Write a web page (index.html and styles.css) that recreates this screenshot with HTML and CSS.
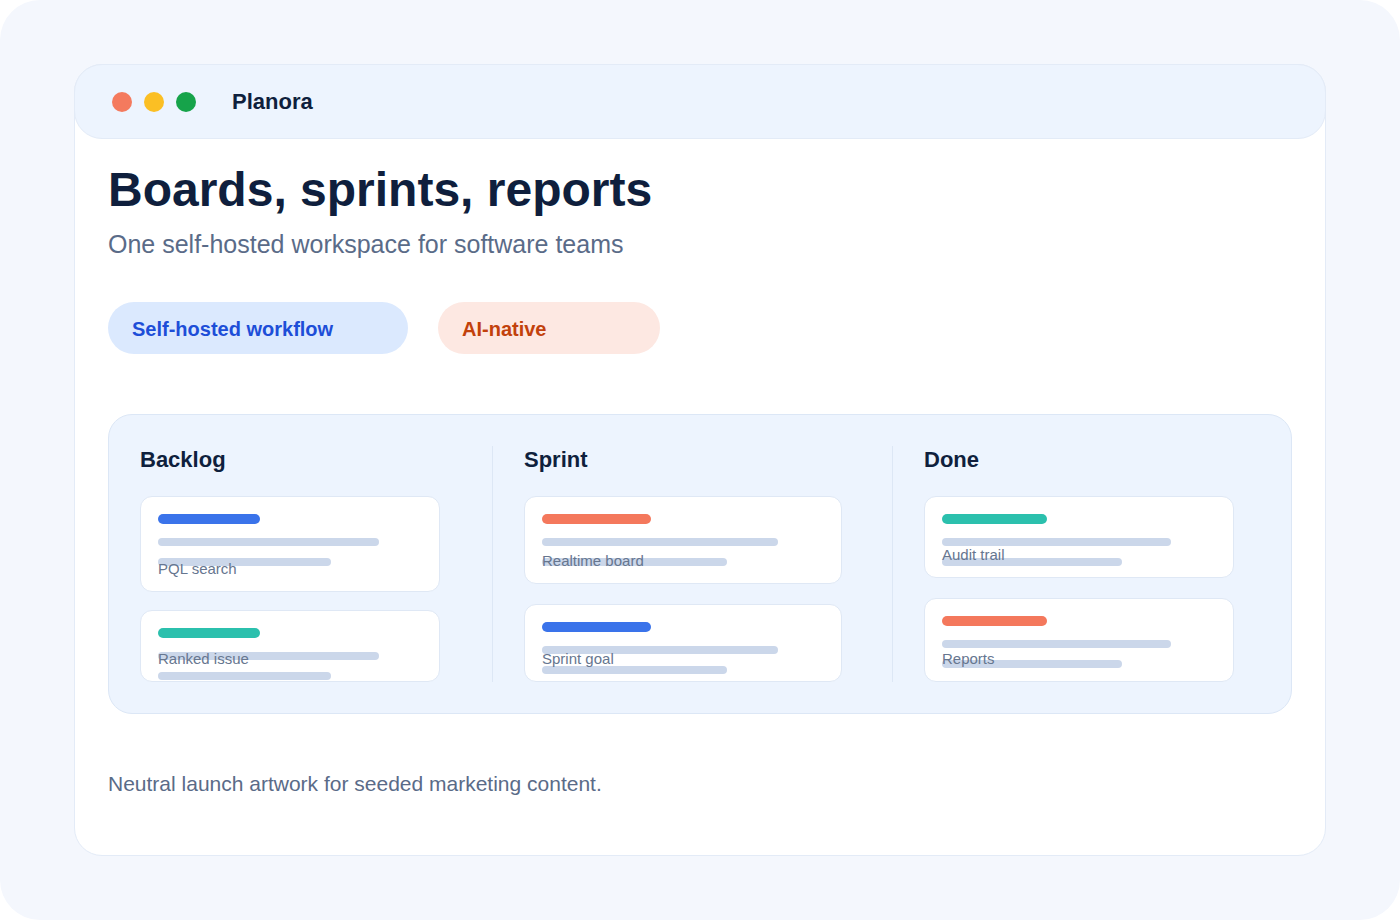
FILE: index.html
```html
<!DOCTYPE html>
<html lang="en">
<head>
  <meta charset="utf-8">
  <meta name="viewport" content="width=device-width, initial-scale=1.0">
  <link rel="stylesheet" href="styles.css">
  <title>Planora</title>
</head>
<body>
  <div class="canvas">
    <div class="window">
      <!-- window chrome -->
      <div class="titlebar">
        <span class="dot dot-red"></span>
        <span class="dot dot-yellow"></span>
        <span class="dot dot-green"></span>
        <span class="app-name">Planora</span>
      </div>

      <div class="content">
        <h1>Boards, sprints, reports</h1>
        <p class="lead">One self-hosted workspace for software teams</p>

        <div class="pills">
          <span class="pill pill-blue">Self-hosted workflow</span>
          <span class="pill pill-red">AI-native</span>
        </div>

        <div class="board">
          <div class="column col-backlog">
            <h2>Backlog</h2>
            <div class="card card-b1">
              <div class="bar bar-blue"></div>
              <div class="line line-long"></div>
              <div class="line line-short"></div>
              <span class="card-label">PQL search</span>
            </div>
            <div class="card card-b2">
              <div class="bar bar-teal"></div>
              <div class="line line-long"></div>
              <div class="line line-short"></div>
              <span class="card-label">Ranked issue</span>
            </div>
          </div>

          <div class="column col-sprint">
            <h2>Sprint</h2>
            <div class="card card-s1">
              <div class="bar bar-coral"></div>
              <div class="line line-long"></div>
              <div class="line line-short"></div>
              <span class="card-label">Realtime board</span>
            </div>
            <div class="card card-s2">
              <div class="bar bar-blue"></div>
              <div class="line line-long"></div>
              <div class="line line-short"></div>
              <span class="card-label">Sprint goal</span>
            </div>
          </div>

          <div class="column col-done">
            <h2>Done</h2>
            <div class="card card-d1">
              <div class="bar bar-teal"></div>
              <div class="line line-long"></div>
              <div class="line line-short"></div>
              <span class="card-label">Audit trail</span>
            </div>
            <div class="card card-d2">
              <div class="bar bar-coral"></div>
              <div class="line line-long"></div>
              <div class="line line-short"></div>
              <span class="card-label">Reports</span>
            </div>
          </div>
        </div>

        <p class="note">Neutral launch artwork for seeded marketing content.</p>
      </div>
    </div>
  </div>
</body>
</html>
```

FILE: styles.css
```css
body {
  margin: 0;
  padding: 0;
  background: #ffffff;
  font-family: "Liberation Sans", Arial, sans-serif;
}

.canvas {
  width: 1400px;
  height: 920px;
  box-sizing: border-box;
  padding: 64px 74px;
  background: #f4f7fd;
  border-radius: 40px;
}

.window {
  height: 792px;
  box-sizing: border-box;
  background: #ffffff;
  border: 1px solid #e3ebf7;
  border-radius: 28px;
}

/* title bar */
.titlebar {
  height: 75px;
  box-sizing: border-box;
  margin: -1px -1px 0;
  padding-left: 37px;
  display: flex;
  align-items: center;
  gap: 12px;
  background: #edf4fe;
  border: 1px solid #e3ebf7;
  border-radius: 28px;
}

.dot {
  width: 20px;
  height: 20px;
  border-radius: 50%;
}

.dot-red { background: #f47a5e; }
.dot-yellow { background: #fbbf24; }
.dot-green { background: #16a34a; }

.app-name {
  margin-left: 24px;
  font-size: 22px;
  font-weight: bold;
  color: #0f1f3d;
}

.content {
  padding: 23px 33px 0;
}

h1 {
  margin: 0;
  font-size: 48px;
  line-height: 56px;
  font-weight: bold;
  color: #0f1f3d;
}

.lead {
  margin: 11px 0 0;
  font-size: 25px;
  line-height: 30px;
  color: #5a6b88;
}

.pills {
  display: flex;
  gap: 30px;
  margin-top: 43px;
}

.pill {
  height: 52px;
  box-sizing: border-box;
  padding: 2px 0 0 24px;
  display: flex;
  align-items: center;
  border-radius: 26px;
  font-size: 20px;
  font-weight: bold;
}

.pill-blue {
  width: 300px;
  background: #dbe9fe;
  color: #1d4ed8;
}

.pill-red {
  width: 222px;
  background: #fde8e2;
  color: #c2410c;
}

/* kanban preview */
.board {
  margin-top: 60px;
  padding: 31px;
  display: flex;
  background: #edf4fe;
  border: 1px solid #dce7f6;
  border-radius: 24px;
}

.column {
  display: flex;
  flex-direction: column;
}

.col-backlog {
  width: 300px;
  margin-right: 52px;
}

.col-sprint {
  width: 318px;
  margin-right: 50px;
  padding-left: 31px;
  border-left: 1px solid #dde7f5;
}

.col-done {
  width: 310px;
  padding-left: 31px;
  border-left: 1px solid #dde7f5;
}

.column h2 {
  margin: 0 0 22px;
  font-size: 22px;
  line-height: 28px;
  font-weight: bold;
  color: #0f1f3d;
}

.card {
  position: relative;
  box-sizing: border-box;
  padding: 17px;
  background: #ffffff;
  border: 1px solid #dfe8f5;
  border-radius: 12px;
}

.card + .card { margin-top: 20px; }
.col-backlog .card + .card { margin-top: 18px; }

.card-b1 { height: 96px; }
.card-b2 { height: 72px; }
.card-s1 { height: 88px; }
.card-s2 { height: 78px; }
.card-d1 { height: 82px; }
.card-d2 { height: 84px; }

.bar {
  width: 38.5%;
  height: 10px;
  border-radius: 5px;
  margin-bottom: 14px;
}

.bar-blue { background: #3a73ea; }
.bar-teal { background: #2bc0ad; }
.bar-coral { background: #f4785c; }

.line {
  height: 8px;
  border-radius: 4px;
  background: #cbd7ea;
}

.line-long {
  width: 83.6%;
  margin-bottom: 12px;
}

.line-short {
  width: 65.6%;
}

.card-label {
  position: absolute;
  left: 17px;
  font-size: 15px;
  line-height: 18px;
  color: #66768f;
}

.card-b1 .card-label { top: 63px; }
.card-b2 .card-label { top: 39px; }
.card-s1 .card-label { top: 55px; }
.card-s2 .card-label { top: 45px; }
.card-d1 .card-label { top: 49px; }
.card-d2 .card-label { top: 51px; }

.note {
  margin: 58px 0 0;
  font-size: 21px;
  line-height: 24px;
  color: #5a6b88;
}
```
